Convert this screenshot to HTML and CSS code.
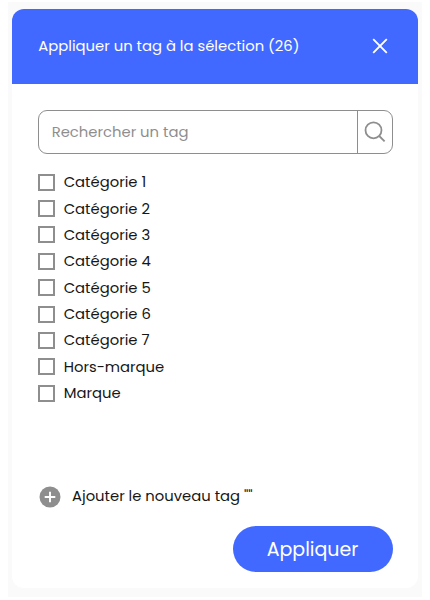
FILE: index.html
```html
<!DOCTYPE html>
<html lang="fr">
<head>
    <meta charset="UTF-8">
    <meta name="viewport" content="width=device-width, initial-scale=1.0">
    <title>Appliquer un tag</title>
    <link rel="stylesheet" href="styles.css">
</head>
<body>
    <div class="backdrop">
        <div class="modal">
            <header class="modal-header">
                <h1>Appliquer un tag à la sélection (26)</h1>
                <button type="button" class="close" aria-label="Fermer">
                    <svg width="16" height="16" viewBox="0 0 16 16">
                        <path d="M1.2 1.2L14.8 14.8M14.8 1.2L1.2 14.8" stroke="#fff" stroke-width="1.9" fill="none"/>
                    </svg>
                </button>
            </header>

            <form class="modal-body">
                <div class="search">
                    <input type="text" placeholder="Rechercher un tag">
                    <button type="button" aria-label="Rechercher">
                        <svg width="22" height="22" viewBox="0 0 22 22" fill="none" stroke="#8e8e8e" stroke-width="1.8">
                            <circle cx="9.5" cy="9.3" r="8"/>
                            <path d="M15.2 15L20.6 20.4"/>
                        </svg>
                    </button>
                </div>

                <ul class="tags">
                    <li><label><input type="checkbox"><span>Catégorie 1</span></label></li>
                    <li><label><input type="checkbox"><span>Catégorie 2</span></label></li>
                    <li><label><input type="checkbox"><span>Catégorie 3</span></label></li>
                    <li><label><input type="checkbox"><span>Catégorie 4</span></label></li>
                    <li><label><input type="checkbox"><span>Catégorie 5</span></label></li>
                    <li><label><input type="checkbox"><span>Catégorie 6</span></label></li>
                    <li><label><input type="checkbox"><span>Catégorie 7</span></label></li>
                    <li><label><input type="checkbox"><span>Hors-marque</span></label></li>
                    <li><label><input type="checkbox"><span>Marque</span></label></li>
                </ul>

                <div class="add-tag">
                    <svg width="22" height="22" viewBox="0 0 22 22">
                        <circle cx="11" cy="11" r="10.5" fill="#8e8e8e"/>
                        <path d="M11 5.7V16.3M5.7 11H16.3" stroke="#fff" stroke-width="1.9"/>
                    </svg>
                    <span>Ajouter le nouveau tag ""</span>
                </div>

                <button type="submit" class="apply">Appliquer</button>
            </form>
        </div>
    </div>
</body>
</html>
```

FILE: styles.css
```css
* {
    box-sizing: border-box;
}

body {
    margin: 0;
    padding: 2px 8px 3px;
    height: 600px;
    background: #fff;
    color: #161616;
    font-family: Poppins, Inter, sans-serif;
    font-size: 14.8px;
}

button {
    border: 0;
    padding: 0;
    background: none;
    font-family: inherit;
}

.backdrop {
    height: 595px;
    padding: 6.5px 4px 9px 4.3px;
    background: #fafafa;
}

.modal {
    height: 579.5px;
    border-radius: 12px;
    background: #fff;
    overflow: hidden;
}

.modal-header {
    display: flex;
    justify-content: space-between;
    align-items: center;
    height: 75.5px;
    padding: 0 30px 0 26px;
    background: #4269ff;
    color: #fff;
}

.modal-header h1 {
    margin: 0 0 1px;
    font-size: 14.8px;
    font-weight: 400;
    white-space: nowrap;
}

.close svg {
    display: block;
}

.modal-body {
    display: flex;
    flex-direction: column;
    padding: 26px 25.5px 0 25.4px;
}

.search {
    display: flex;
    height: 44px;
    border: 1px solid #8e8e8e;
    border-radius: 9px;
}

.search input {
    flex: 1;
    min-width: 0;
    border: 0;
    padding: 0 13px;
    background: none;
    font-family: inherit;
    font-size: 14.8px;
    outline: none;
}

.search input::placeholder {
    color: #8e8e8e;
}

.search button {
    display: flex;
    justify-content: center;
    align-items: center;
    width: 35px;
    border-left: 1px solid #8e8e8e;
}

.tags {
    height: 237.4px;
    margin: 15px 0 0;
    padding: 0;
    list-style: none;
}

.tags label {
    display: flex;
    align-items: center;
    height: 26.38px;
}

.tags input {
    appearance: none;
    width: 17px;
    height: 17px;
    margin: 0 9px 0 0;
    border: 2px solid #8e8e8e;
}

.add-tag {
    display: flex;
    align-items: center;
    gap: 11px;
    height: 24px;
    margin-top: 78.6px;
    padding-left: 1.3px;
}

.add-tag > span {
    margin-bottom: 2px;
    white-space: nowrap;
}

.apply {
    align-self: flex-end;
    width: 160px;
    height: 46px;
    margin-top: 17.5px;
    border-radius: 23px;
    background: #4269ff;
    color: #fff;
    font-size: 19px;
}
```
